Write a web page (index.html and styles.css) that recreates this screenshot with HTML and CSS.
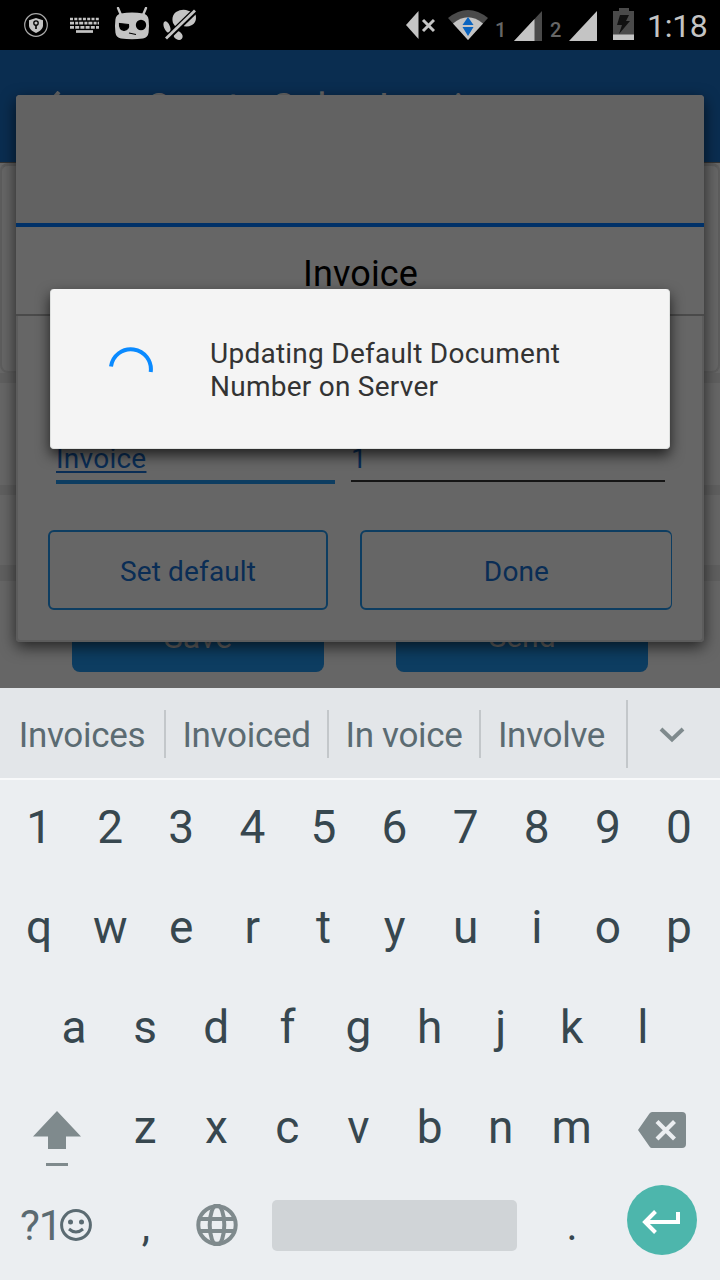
FILE: index.html
```html
<!DOCTYPE html>
<html lang="en">
<head>
<meta charset="utf-8">
<title>Create Sales Invoice</title>
<link rel="stylesheet" href="styles.css">
</head>
<body>
<div class="screen">
  <div class="status">
    <svg class="st-shield" width="24" height="24" viewBox="0 0 24 24"><circle cx="12" cy="12" r="11.3" fill="none" stroke="#a9a9a9" stroke-width="1.2"/><path d="M12 5l7 2.3v5c0 3.500-3 6-7 7.700-4-1.700-7-4.200-7-7.700v-5z" fill="#c4c4c4"/><circle cx="12" cy="10" r="2.200" fill="none" stroke="#000" stroke-width="1.300"/><path d="M12 12v4" stroke="#000" stroke-width="1.600"/></svg>
    <svg class="st-keys" width="30" height="17" viewBox="0 0 30 17" fill="none" stroke="#c4c4c4" stroke-width="2.700"><path d="M0 2h29" stroke-dasharray="3 1.300"/><path d="M0 6.200h29" stroke-dasharray="4 1.200 3 1"/><path d="M0 10.400h29" stroke-dasharray="4 1.200"/><path d="M6 14.500h17"/></svg>
    <svg class="st-cid" width="36" height="33" viewBox="0 0 36 33"><path d="M4 1l3 7M32 1l-3 7" stroke="#c4c4c4" stroke-width="2.400" stroke-linecap="round"/><path d="M7 6.500q11-2 22 0 5 1 5.600 6 .8 6 0 13-.6 5-5.600 6-11 1.500-22 0-5-1-5.600-6-.8-7 0-13Q2 7.500 7 6.500z" fill="#c4c4c4"/><circle cx="27" cy="18" r="5.200"/><path d="M5.500 16.500l9 1q1 5-4.500 6-5-1-4.500-7zM15 26l7 1.500" stroke="#000" stroke-width="1.200"/></svg>
    <svg class="st-mute" width="34" height="32" viewBox="0 0 34 32"><path d="M10 14Q8 7 13 3q5-3 10-2l9 3q3 8-3 12-6 3-10 0l-5 4z" fill="#c4c4c4"/><ellipse cx="4" cy="18" rx="3" ry="6" transform="rotate(-22 4 18)" fill="#c4c4c4"/><ellipse cx="15" cy="26.500" rx="4" ry="5" transform="rotate(-50 15 26.500)" fill="#c4c4c4"/><path d="M2 31L33 1" stroke="#000" stroke-width="6"/><path d="M3 29.500L32 1.500" stroke="#c4c4c4" stroke-width="2.800"/></svg>
    <svg class="st-vol" width="29" height="28" viewBox="0 0 29 28"><path d="M12.500 0v28L0 14z" fill="#c4c4c4"/><path d="M17 9l11 11M28 9L17 20" stroke="#c4c4c4" stroke-width="3"/></svg>
    <svg class="st-wifi" width="40" height="30" viewBox="0 0 40 30"><path d="M0 8Q20-8 40 8L20 30z" fill="#4a4a4a"/><path d="M5 13.500Q20 1 35 13.500L20 30z" fill="#c4c4c4"/><path d="M20 7l5.500 8h-11zM20 26l-5.500-9h11z" fill="#0a64c0"/></svg>
    <span class="sim sim-1">1</span>
    <svg class="st-sig" width="29" height="30" viewBox="0 0 29 30"><path d="M28 0v30H0z" fill="#4a4a4a"/><path d="M20.500 8V30H0z" fill="#c4c4c4"/></svg>
    <span class="sim sim-2">2</span>
    <svg class="st-sig2" width="29" height="30" viewBox="0 0 29 30"><path d="M28 0v30H0z" fill="#c4c4c4"/></svg>
    <svg class="st-bat" width="21" height="32" viewBox="0 0 21 32"><path d="M6 0h10v3h5v29H0V3h6z" fill="#4a4a4a"/><path d="M0 26.500h21V32H0z" fill="#c4c4c4"/><path d="M7 7h9l-3 6h4L6 26l3-9H4z" fill="#111"/></svg>
    <span class="clock">1:18</span>
  </div>
  <div class="appbar">
    <svg width="16" height="30" viewBox="0 0 16 30"><path d="M14 1L2 15l12 14" fill="none" stroke="#666" stroke-width="4"/></svg>
    <span class="appbar-title">Create Sales Invoice</span>
  </div>
  <div class="content">
    <div class="card"></div>
    <div class="band band-a"></div>
    <div class="band band-b"></div>
    <div class="band band-c"></div>
    <div class="actions">
      <div class="action save">Save</div>
      <div class="action send">Send</div>
    </div>
  </div>
  <div class="keyboard">
    <div class="suggestions">
      <span class="sug s1">Invoices</span><i class="sep"></i>
      <span class="sug s2">Invoiced</span><i class="sep"></i>
      <span class="sug s3">In voice</span><i class="sep"></i>
      <span class="sug s4">Involve</span><i class="sep tall"></i>
      <svg class="more" width="26" height="16" viewBox="0 0 26 16"><path d="M2 2l11 10.500L24 2" fill="none" stroke="#7f8a8d" stroke-width="4"/></svg>
    </div>
    <div class="row digits"><b>1</b><b>2</b><b>3</b><b>4</b><b>5</b><b>6</b><b>7</b><b>8</b><b>9</b><b>0</b></div>
    <div class="row"><b>q</b><b>w</b><b>e</b><b>r</b><b>t</b><b>y</b><b>u</b><b>i</b><b>o</b><b>p</b></div>
    <div class="row row-a"><b>a</b><b>s</b><b>d</b><b>f</b><b>g</b><b>h</b><b>j</b><b>k</b><b>l</b></div>
    <div class="row row-z">
      <div class="side"><svg class="shift" width="48" height="55" viewBox="0 0 48 55" fill="#7f8a8d"><path d="M24 0l24 25.500H33V38H15V25.500H0zM13 52h22v3H13z"/></svg></div>
      <b>z</b><b>x</b><b>c</b><b>v</b><b>b</b><b>n</b><b>m</b>
      <div class="side"><svg class="del" width="48" height="36" viewBox="0 0 48 36"><path d="M14 0h30q4 0 4 4v28q0 4-4 4H14q-1.500 0-2.500-1.500L0 18 11.500 1.500Q12.500 0 14 0z" fill="#7f8a8d"/><path d="M19 9.500l17.500 17.500M36.500 9.500L19 27" stroke="#ebeef1" stroke-width="4.200"/></svg></div>
    </div>
    <div class="bottom">
      <span class="sym">?1</span>
      <svg class="smile" width="32" height="32" viewBox="0 0 32 32"><circle cx="16" cy="16" r="14.400" fill="none" stroke="#5b6b72" stroke-width="3"/><circle cx="10.500" cy="13" r="2.500" fill="#5b6b72"/><circle cx="21.500" cy="13" r="2.500" fill="#5b6b72"/><path d="M9 20q7 6 14 0" fill="none" stroke="#5b6b72" stroke-width="3"/></svg>
      <span class="comma">,</span>
      <svg class="globe" width="42" height="42" viewBox="0 0 42 42" fill="none" stroke="#7f8a8d" stroke-width="4"><circle cx="21" cy="21" r="18.700"/><ellipse cx="21" cy="21" rx="7.300" ry="20"/><path d="M3 15h36M3 27h36"/></svg>
      <div class="space"></div>
      <span class="dot">.</span>
      <div class="enter"><svg width="38" height="24" viewBox="0 0 38 24" fill="none" stroke="#fff" stroke-width="4"><path d="M36 2v10H3"/><path d="M13.500 1.500L3 12l10.500 10.500"/></svg></div>
    </div>
  </div>

  <div class="dialog">
    <div class="dialog-top"></div>
    <div class="dialog-title">Invoice</div>
    <div class="dialog-body">
      <div class="fields">
        <div class="field name"><u>Invoice</u></div>
        <div class="field num">1</div>
      </div>
      <div class="buttons">
        <div class="btn set">Set default</div>
        <div class="btn done">Done</div>
      </div>
    </div>
  </div>

  <div class="progress">
    <svg class="spinner" width="44" height="44" viewBox="0 0 44 44"><path d="M2 19.500A20 20 0 1 1 41.700 25" fill="none" stroke="#0a8aff" stroke-width="4"/></svg>
    <div class="message">Updating Default Document<br>Number on Server</div>
  </div>
</div>
</body>
</html>
```

FILE: styles.css
```css
* { box-sizing: border-box; }
body { margin: 0; font-family: Roboto, "Liberation Sans", sans-serif; }
svg { display: block; flex: none; }
.screen { position: relative; width: 720px; height: 1280px; overflow: hidden; background: #666; display: flex; flex-direction: column; }

.status { height: 50px; flex: none; background: #000; color: #c4c4c4; display: flex; align-items: flex-start; }
.st-shield { margin: 13px 0 0 24px; }
.st-keys { margin: 17px 0 0 22px; }
.st-cid { margin: 7px 0 0 14px; }
.st-mute { margin: 9px 0 0 13px; }
.st-vol { margin: 11px 0 0 209px; }
.st-wifi { margin: 10px 0 0 13px; }
.sim { font-size: 20px; line-height: 24px; font-weight: 500; color: #666; width: 12px; margin-top: 18px; }
.sim-1 { margin-left: 7px; }
.st-sig { margin: 11px 0 0 7px; }
.sim-2 { margin-left: 7px; }
.st-sig2 { margin: 11px 0 0 7px; }
.st-bat { margin: 8px 0 0 15px; }
.clock { font-size: 32px; line-height: 40px; margin: 6px 0 0 13px; white-space: nowrap; letter-spacing: -.3px; }

.appbar { height: 112px; flex: none; background: #0a2d50; display: flex; align-items: center; padding: 0 0 0 45px; }
.appbar-title { font-size: 40px; line-height: 48px; margin: 5px 0 0 84px; color: #666; white-space: nowrap; }

.content { height: 526px; flex: none; background: #666; border-top: 1px solid #333; display: flex; flex-direction: column; }
.card { height: 210px; flex: none; background: #666; border: 2px solid #5d5d5d; border-top: 3px solid #5a5a5a; border-radius: 8px; }
.band { flex: none; background: #5f5f5f; }
.band-a { height: 10px; }
.band-b { height: 10px; margin-top: 102px; }
.band-c { height: 16px; margin-top: 70px; }
.actions { display: flex; gap: 72px; padding: 15px 72px 0; }
.action { width: 252px; height: 76px; border-radius: 8px; background: #0d3d61; color: #666; text-align: center; }
.save { font-size: 32px; line-height: 82px; }
.send { font-size: 30px; line-height: 82px; }

.keyboard { flex: none; height: 592px; background: #ebeef1; position: relative; z-index: 1; }
.suggestions { height: 92px; background: #e3e6e9; border-bottom: 2px solid #f8f9fa; display: flex; align-items: center; }
.sug { font-size: 35px; line-height: 44px; letter-spacing: -.3px; color: #5b6b72; text-align: center; white-space: nowrap; margin-top: 6px; }
.s1 { width: 164px; }
.s2 { width: 161px; }
.s3 { width: 150px; }
.s4 { width: 145px; padding-right: 4px; }
.sep { width: 2px; height: 48px; background: #c3c7ca; margin-top: 2px; }
.sep.tall { height: 68px; }
.more { margin: 4px 0 0 31px; }
.row { height: 100px; padding: 0 6px 6px 4px; display: flex; align-items: center; justify-content: center; }
.row b { width: 71.1px; flex: none; font-weight: 400; font-size: 46px; line-height: 60px; text-align: center; color: #37474f; }
.row.digits { padding-bottom: 7px; }
.row-a, .row-z { padding-right: 7px; }
.side { width: 105px; height: 94px; flex: none; display: flex; align-items: flex-start; }
.shift { margin: 31px 0 0 28px; }
.del { margin: 32px 0 0 31px; }
.bottom { height: 98px; display: flex; align-items: flex-start; color: #37474f; font-size: 42px; line-height: 50px; }
.sym { width: 40px; margin: 21px 0 0 20px; color: #5b6b72; white-space: nowrap; letter-spacing: -1px; }
.smile { margin-top: 29px; }
.comma { width: 20px; margin: 22px 0 0 44px; text-align: center; }
.globe { margin: 24px 0 0 40px; }
.space { width: 245px; height: 51px; margin: 20px 0 0 34px; border-radius: 5px; background: #d0d4d7; }
.dot { width: 20px; margin: 21px 0 0 45px; text-align: center; }
.enter { width: 70px; height: 70px; margin: 5px 0 0 45px; border-radius: 50%; background: #4db6ac; display: flex; align-items: center; justify-content: center; padding: 4px 2px 0 0; }

.dialog { position: absolute; left: 16px; top: 95px; width: 688px; height: 547px; border-radius: 4px; background: #666; box-shadow: 0 5px 15px rgba(0,0,0,.65); z-index: 2; display: flex; flex-direction: column; }
.dialog-top { height: 132px; flex: none; background: #626262; border-bottom: 4px solid #003168; border-radius: 4px 4px 0 0; }
.dialog-title { height: 89px; flex: none; border-bottom: 2px solid #4a4a4a; font-size: 36px; line-height: 95px; padding-left: 1px; text-align: center; color: #000; letter-spacing: .1px; }
.dialog-body { flex: 1; border: 2px solid #5c5c5c; border-top: 0; border-radius: 0 0 4px 4px; padding: 126px 30px 0; }
.fields { display: flex; gap: 16px; padding: 0 7px 0 8px; font-size: 28px; line-height: 34px; color: #0a2d55; }
.field { height: 42px; }
.name { width: 279px; border-bottom: 4px solid #0d3d61; letter-spacing: .25px; }
.name u { text-underline-offset: 3px; text-decoration-thickness: 1.5px; }
.num { width: 314px; height: 40px; border-bottom: 2px solid #151515; }
.buttons { display: flex; gap: 32px; padding-top: 46px; }
.btn { height: 80px; border: 2px solid #0d3d61; border-radius: 6px; text-align: center; font-size: 28px; line-height: 80px; letter-spacing: .15px; color: #0a2d55; }
.set { width: 280px; }
.done { width: 312px; border-right-width: 1px; }

.progress { position: absolute; left: 50px; top: 289px; width: 620px; height: 160px; border-radius: 4px; background: #f4f4f4; border: 1px solid #dfe1e0; border-top: 0; box-shadow: 0 6px 14px rgba(0,0,0,.7); z-index: 3; display: flex; align-items: center; }
.spinner { margin-left: 58px; }
.message { margin: 3px 0 0 57px; font-size: 28px; line-height: 33px; letter-spacing: .25px; color: #333; white-space: nowrap; }
```
